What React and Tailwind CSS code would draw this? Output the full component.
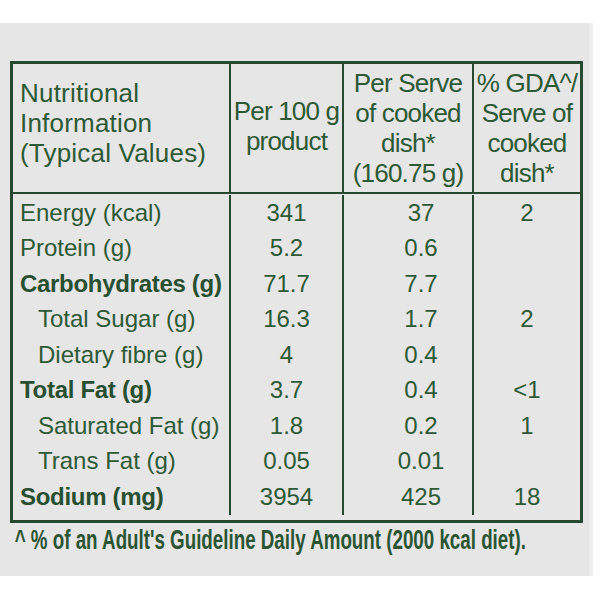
const rows = [
  { label: "Energy (kcal)", per100: "341", serve: "37", gda: "2" },
  { label: "Protein (g)", per100: "5.2", serve: "0.6", gda: "" },
  { label: "Carbohydrates (g)", per100: "71.7", serve: "7.7", gda: "", bold: true },
  { label: "Total Sugar (g)", per100: "16.3", serve: "1.7", gda: "2", indent: true },
  { label: "Dietary fibre (g)", per100: "4", serve: "0.4", gda: "", indent: true },
  { label: "Total Fat (g)", per100: "3.7", serve: "0.4", gda: "<1", bold: true },
  { label: "Saturated Fat (g)", per100: "1.8", serve: "0.2", gda: "1", indent: true },
  { label: "Trans Fat (g)", per100: "0.05", serve: "0.01", gda: "", indent: true },
  { label: "Sodium (mg)", per100: "3954", serve: "425", gda: "18", bold: true },
];

const App = () => {
  return (
    <div className="w-[600px] h-[600px] bg-white pt-[23px] font-['Liberation_Sans',Arial,sans-serif] text-[#2d5935]">
      <div className="w-[593px] h-[553px] bg-[#e6e6e6] border-r-4 border-[#eeeeee] pl-[10px] pt-[38px]">
        <div className="w-[573px] border-[3px] border-[#27492f]">
          {/* header */}
          <div className="flex h-[130px] border-b-2 border-[#27492f] text-[26px] leading-[30px]">
            <div className="w-[218px] border-r-2 border-[#27492f] flex items-center pl-[7px] pb-[10px]">
              <p className="tracking-[0.2px]">
                Nutritional
                <br />
                Information
                <br />
                (Typical Values)
              </p>
            </div>
            <div className="w-[113px] border-r-2 border-[#27492f] flex items-center justify-center text-center pb-[4px]">
              <p className="tracking-[-0.8px] whitespace-nowrap">
                Per 100 g
                <br />
                product
              </p>
            </div>
            <div className="w-[130px] border-r-2 border-[#27492f] flex items-center justify-center text-center">
              <p className="tracking-[-0.8px] whitespace-nowrap">
                Per Serve
                <br />
                of cooked
                <br />
                dish*
                <br />
                (160.75 g)
              </p>
            </div>
            <div className="w-[106px] flex items-center justify-center text-center">
              <p className="tracking-[-0.8px] whitespace-nowrap">
                % GDA^/
                <br />
                Serve of
                <br />
                cooked
                <br />
                dish*
              </p>
            </div>
          </div>
          {/* body */}
          <div className="grid grid-cols-[218px_113px_130px_106px] pt-[1px] pb-[5px] text-[24px]">
            {rows.map((row) => (
              <div key={row.label} className="contents">
                <div
                  className={`h-[35.5px] flex items-center border-r-2 border-[#27492f] whitespace-nowrap ${
                    row.indent ? "pl-[25px]" : "pl-[7px]"
                  } ${row.bold ? "font-bold text-[#284f30] tracking-[-0.3px]" : ""}`}
                >
                  {row.label}
                </div>
                <div className="h-[35.5px] flex items-center justify-center border-r-2 border-[#27492f]">
                  {row.per100}
                </div>
                <div className="h-[35.5px] flex items-center justify-center border-r-2 border-[#27492f] pl-[26px]">
                  {row.serve}
                </div>
                <div className="h-[35.5px] flex items-center justify-center">{row.gda}</div>
              </div>
            ))}
          </div>
        </div>
        <p className="pl-[7px] whitespace-nowrap text-[28px] font-bold leading-[34px] text-[#2a5432] origin-left scale-x-[0.67]">
          ^ % of an Adult's Guideline Daily Amount (2000 kcal diet).
        </p>
      </div>
    </div>
  );
};

export default App;
